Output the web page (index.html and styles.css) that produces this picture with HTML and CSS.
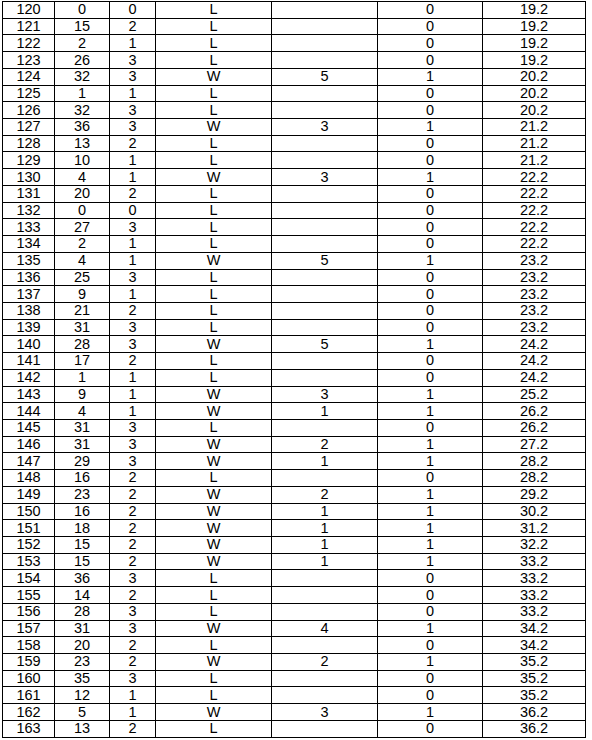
FILE: index.html
```html
<!DOCTYPE html>
<html>
<head>
<meta charset="utf-8">
<link rel="stylesheet" href="styles.css">
</head>
<body>
<div class="wrap">
<table class="data">
<colgroup>
<col class="c1"><col class="c2"><col class="c3"><col class="c4"><col class="c5"><col class="c6"><col class="c7">
</colgroup>
<tbody>
<tr><td>120</td><td>0</td><td>0</td><td>L</td><td></td><td>0</td><td>19.2</td></tr>
<tr><td>121</td><td>15</td><td>2</td><td>L</td><td></td><td>0</td><td>19.2</td></tr>
<tr><td>122</td><td>2</td><td>1</td><td>L</td><td></td><td>0</td><td>19.2</td></tr>
<tr><td>123</td><td>26</td><td>3</td><td>L</td><td></td><td>0</td><td>19.2</td></tr>
<tr><td>124</td><td>32</td><td>3</td><td>W</td><td>5</td><td>1</td><td>20.2</td></tr>
<tr><td>125</td><td>1</td><td>1</td><td>L</td><td></td><td>0</td><td>20.2</td></tr>
<tr><td>126</td><td>32</td><td>3</td><td>L</td><td></td><td>0</td><td>20.2</td></tr>
<tr><td>127</td><td>36</td><td>3</td><td>W</td><td>3</td><td>1</td><td>21.2</td></tr>
<tr><td>128</td><td>13</td><td>2</td><td>L</td><td></td><td>0</td><td>21.2</td></tr>
<tr><td>129</td><td>10</td><td>1</td><td>L</td><td></td><td>0</td><td>21.2</td></tr>
<tr><td>130</td><td>4</td><td>1</td><td>W</td><td>3</td><td>1</td><td>22.2</td></tr>
<tr><td>131</td><td>20</td><td>2</td><td>L</td><td></td><td>0</td><td>22.2</td></tr>
<tr><td>132</td><td>0</td><td>0</td><td>L</td><td></td><td>0</td><td>22.2</td></tr>
<tr><td>133</td><td>27</td><td>3</td><td>L</td><td></td><td>0</td><td>22.2</td></tr>
<tr><td>134</td><td>2</td><td>1</td><td>L</td><td></td><td>0</td><td>22.2</td></tr>
<tr><td>135</td><td>4</td><td>1</td><td>W</td><td>5</td><td>1</td><td>23.2</td></tr>
<tr><td>136</td><td>25</td><td>3</td><td>L</td><td></td><td>0</td><td>23.2</td></tr>
<tr><td>137</td><td>9</td><td>1</td><td>L</td><td></td><td>0</td><td>23.2</td></tr>
<tr><td>138</td><td>21</td><td>2</td><td>L</td><td></td><td>0</td><td>23.2</td></tr>
<tr><td>139</td><td>31</td><td>3</td><td>L</td><td></td><td>0</td><td>23.2</td></tr>
<tr><td>140</td><td>28</td><td>3</td><td>W</td><td>5</td><td>1</td><td>24.2</td></tr>
<tr><td>141</td><td>17</td><td>2</td><td>L</td><td></td><td>0</td><td>24.2</td></tr>
<tr><td>142</td><td>1</td><td>1</td><td>L</td><td></td><td>0</td><td>24.2</td></tr>
<tr><td>143</td><td>9</td><td>1</td><td>W</td><td>3</td><td>1</td><td>25.2</td></tr>
<tr><td>144</td><td>4</td><td>1</td><td>W</td><td>1</td><td>1</td><td>26.2</td></tr>
<tr><td>145</td><td>31</td><td>3</td><td>L</td><td></td><td>0</td><td>26.2</td></tr>
<tr><td>146</td><td>31</td><td>3</td><td>W</td><td>2</td><td>1</td><td>27.2</td></tr>
<tr><td>147</td><td>29</td><td>3</td><td>W</td><td>1</td><td>1</td><td>28.2</td></tr>
<tr><td>148</td><td>16</td><td>2</td><td>L</td><td></td><td>0</td><td>28.2</td></tr>
<tr><td>149</td><td>23</td><td>2</td><td>W</td><td>2</td><td>1</td><td>29.2</td></tr>
<tr><td>150</td><td>16</td><td>2</td><td>W</td><td>1</td><td>1</td><td>30.2</td></tr>
<tr><td>151</td><td>18</td><td>2</td><td>W</td><td>1</td><td>1</td><td>31.2</td></tr>
<tr><td>152</td><td>15</td><td>2</td><td>W</td><td>1</td><td>1</td><td>32.2</td></tr>
<tr><td>153</td><td>15</td><td>2</td><td>W</td><td>1</td><td>1</td><td>33.2</td></tr>
<tr><td>154</td><td>36</td><td>3</td><td>L</td><td></td><td>0</td><td>33.2</td></tr>
<tr><td>155</td><td>14</td><td>2</td><td>L</td><td></td><td>0</td><td>33.2</td></tr>
<tr><td>156</td><td>28</td><td>3</td><td>L</td><td></td><td>0</td><td>33.2</td></tr>
<tr><td>157</td><td>31</td><td>3</td><td>W</td><td>4</td><td>1</td><td>34.2</td></tr>
<tr><td>158</td><td>20</td><td>2</td><td>L</td><td></td><td>0</td><td>34.2</td></tr>
<tr><td>159</td><td>23</td><td>2</td><td>W</td><td>2</td><td>1</td><td>35.2</td></tr>
<tr><td>160</td><td>35</td><td>3</td><td>L</td><td></td><td>0</td><td>35.2</td></tr>
<tr><td>161</td><td>12</td><td>1</td><td>L</td><td></td><td>0</td><td>35.2</td></tr>
<tr><td>162</td><td>5</td><td>1</td><td>W</td><td>3</td><td>1</td><td>36.2</td></tr>
<tr><td>163</td><td>13</td><td>2</td><td>L</td><td></td><td>0</td><td>36.2</td></tr>
</tbody>
</table>
</div>
</body>
</html>
```

FILE: styles.css
```css
html, body {
  margin: 0;
  padding: 0;
  background: #ffffff;
}
.wrap {
  padding: 1px 0 0 2px;
}
.data {
  border-collapse: collapse;
  table-layout: fixed;
  width: 583px;
  font-family: "Liberation Sans Narrow", "Arial Narrow", "Liberation Sans", Arial, sans-serif;
  font-size: 14.5px;
  color: #000000;
}
.data td {
  border: 1px solid #000000;
  padding: 0;
  height: 15.73px;
  line-height: 15px;
  text-align: center;
  vertical-align: middle;
}
.c1 { width: 52px; }
.c2 { width: 55px; }
.c3 { width: 46px; }
.c4 { width: 116px; }
.c5 { width: 106px; }
.c6 { width: 105px; }
.c7 { width: 103px; }
```
